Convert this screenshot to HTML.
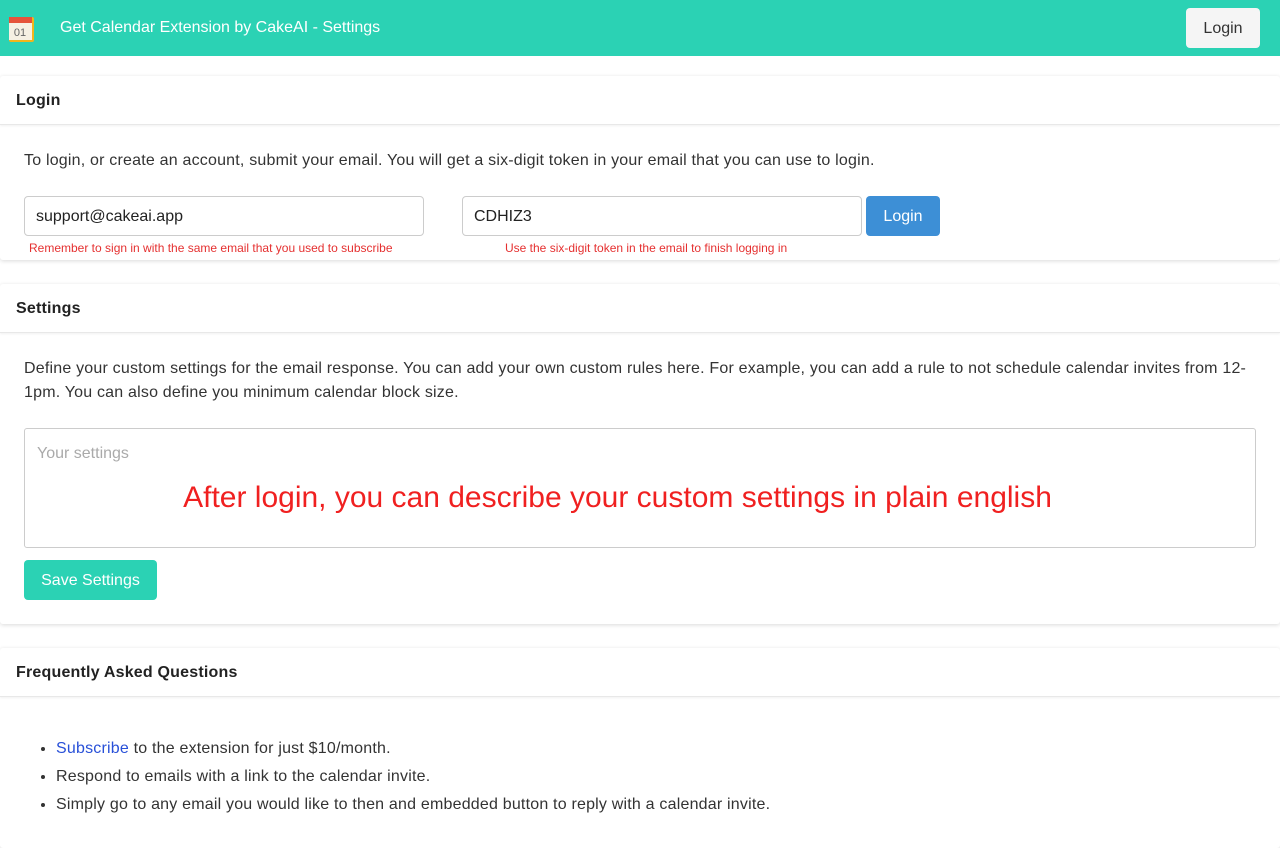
<!DOCTYPE html>
<html><head><meta charset="utf-8"><style>
*{box-sizing:border-box;margin:0;padding:0}
body{width:1280px;height:800px;overflow:hidden;background:#fff;font-family:"Liberation Sans",sans-serif;color:#222;position:relative}
.nav{position:absolute;left:0;top:0;width:1280px;height:56px;background:#2bd2b4}
.nav .t{position:absolute;left:60px;top:19px;color:#fff;font-size:16px}
.nav .btn{position:absolute;right:20px;top:8px;width:74px;height:40px;background:#f5f5f5;border-radius:4px;font-size:16px;color:#333;text-align:center;line-height:42px}
.card{position:absolute;left:0;width:1280px;background:#fff;box-shadow:0 1px 4px rgba(0,0,0,.15);border-radius:3px}
.hd{height:49px;border-bottom:1px solid #e8e8e8;box-shadow:0 1px 2px rgba(0,0,0,.06);padding:16px;font-weight:bold;font-size:16px;letter-spacing:0.2px}
p{font-size:16px;line-height:24px;color:#333;letter-spacing:0.2px}
.inp{position:absolute;height:40px;border:1px solid #ccc;border-radius:4px;padding:0 11px;line-height:40px;font-size:16px;color:#222}
.hint{position:absolute;font-size:12px;color:#e53030}
</style></head><body>
<div class="nav">
<svg style="position:absolute;left:8px;top:15px" width="27" height="27" viewBox="0 0 27 27"><rect x="1" y="2" width="25" height="25" rx="2" fill="#f2b51c"/><rect x="1" y="2" width="23" height="23" fill="#f6f0e3"/><rect x="1" y="2" width="23" height="6" fill="#e5533a"/><text x="12" y="21" font-size="11" text-anchor="middle" fill="#666" font-family="Liberation Sans">01</text></svg>
<div class="t">Get Calendar Extension by CakeAI - Settings</div>
<div class="btn">Login</div></div>

<div class="card" style="top:76px;height:184px">
<div class="hd">Login</div>
<p style="position:absolute;left:24px;top:73px">To login, or create an account, submit your email. You will get a six-digit token in your email that you can use to login.</p>
<div class="inp" style="left:24px;top:120px;width:400px">support@cakeai.app</div>
<div class="inp" style="left:462px;top:120px;width:400px">CDHIZ3</div>
<div style="position:absolute;left:866px;top:120px;width:74px;height:40px;background:#3d8fd6;color:#fff;border-radius:4px;text-align:center;line-height:41px;font-size:16px">Login</div>
<div class="hint" style="left:29px;top:165px">Remember to sign in with the same email that you used to subscribe</div>
<div class="hint" style="left:505px;top:165px">Use the six-digit token in the email to finish logging in</div>
</div>

<div class="card" style="top:284px;height:340px">
<div class="hd">Settings</div>
<p style="position:absolute;left:24px;top:73px;width:1225px">Define your custom settings for the email response. You can add your own custom rules here. For example, you can add a rule to not schedule calendar invites from 12-1pm. You can also define you minimum calendar block size.</p>
<div style="position:absolute;left:24px;top:144px;width:1232px;height:120px;border:1px solid #ccc;border-radius:3px">
<div style="position:absolute;left:12px;top:16px;color:#aaa;font-size:16px">Your settings</div>
<div style="position:absolute;left:0;width:1185px;top:52px;text-align:center;color:#f02020;font-size:30px">After login, you can describe your custom settings in plain english</div></div>
<div style="position:absolute;left:24px;top:276px;width:133px;height:40px;background:#2bd2b4;color:#fff;border-radius:4px;text-align:center;line-height:41px;font-size:16px">Save Settings</div>
</div>

<div class="card" style="top:648px;height:200px">
<div class="hd">Frequently Asked Questions</div>
<ul style="position:absolute;left:56px;top:87px;font-size:16px;line-height:28px;color:#333;letter-spacing:0.2px">
<li><span style="color:#2850d8">Subscribe</span> to the extension for just $10/month.</li>
<li>Respond to emails with a link to the calendar invite.</li>
<li>Simply go to any email you would like to then and embedded button to reply with a calendar invite.</li>
</ul></div>
</body></html>
